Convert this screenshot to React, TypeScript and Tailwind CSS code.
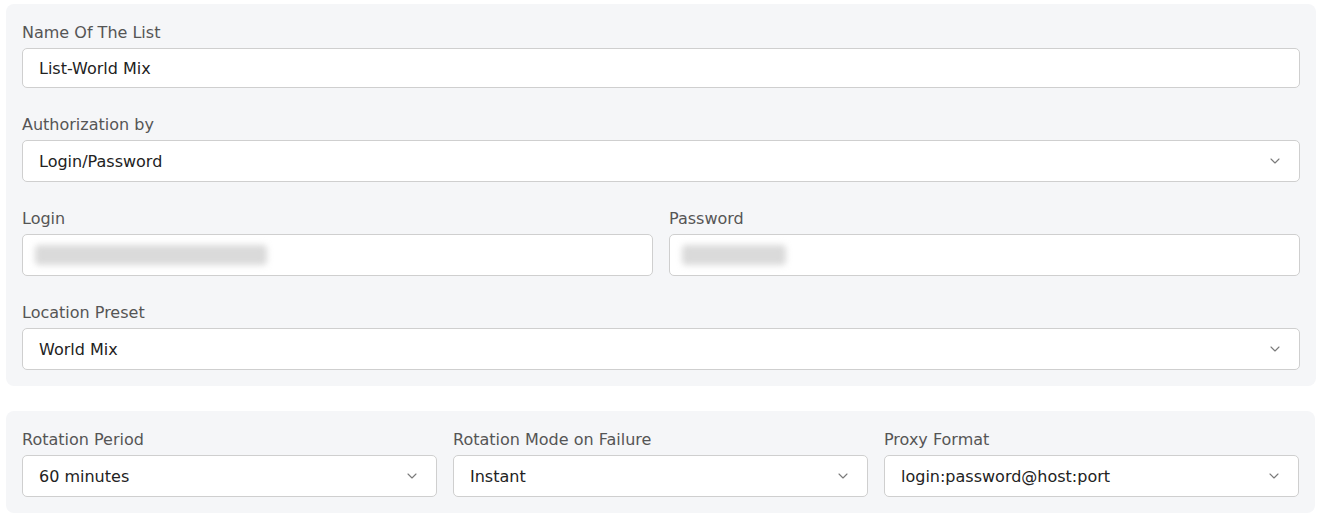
import React from 'react';

const font = { fontFamily: '"DejaVu Sans", Verdana, sans-serif' };

function Chevron() {
  return (
    <svg width="10" height="6" viewBox="0 0 10 6" fill="none" className="shrink-0">
      <path d="M1 1l4 4 4-4" stroke="#7a7a7a" strokeWidth="1.1" strokeLinecap="round" strokeLinejoin="round" />
    </svg>
  );
}

function Label({ children }: { children: React.ReactNode }) {
  return <div className="text-[16px] leading-[22px] pt-[2px] text-[#555] mb-[4px]">{children}</div>;
}

function TextBox({ value, h = 'h-[42px]' }: { value: React.ReactNode; h?: string }) {
  return (
    <div className={`${h} bg-white border border-[#cfcfcf] rounded-[5px] pl-4 pr-5 flex items-center text-[16px] text-[#222] pt-[2px]`}>
      {value}
    </div>
  );
}

function Select({ value }: { value: string }) {
  return (
    <div className="h-[42px] bg-white border border-[#cfcfcf] rounded-[5px] pl-4 pr-[19px] flex items-center justify-between text-[16px] text-[#222]">
      <span className="pt-[2px]">{value}</span>
      <Chevron />
    </div>
  );
}

// masked credential values
function Blurred({ width }: { width: string }) {
  return <div className={`${width} h-[20px] bg-[#dadada] rounded-sm blur-[3px] -ml-[4px] -mt-[2px]`} />;
}

export default function App() {
  return (
    <div className="w-[1325px] h-[523px] bg-white px-[6px] pt-[4px]" style={font}>
      <div className="w-[1310px] bg-[#f5f6f8] rounded-[8px] p-4 flex flex-col gap-6">
        <div>
          <Label>Name Of The List</Label>
          <TextBox value="List-World Mix" h="h-10" />
        </div>
        <div>
          <Label>Authorization by</Label>
          <Select value="Login/Password" />
        </div>
        <div className="grid grid-cols-2 gap-4">
          <div>
            <Label>Login</Label>
            <TextBox value={<Blurred width="w-[232px]" />} />
          </div>
          <div>
            <Label>Password</Label>
            <TextBox value={<Blurred width="w-[104px]" />} />
          </div>
        </div>
        <div>
          <Label>Location Preset</Label>
          <Select value="World Mix" />
        </div>
      </div>

      <div className="w-[1309px] mt-[25px] bg-[#f5f6f8] rounded-[8px] p-4 grid grid-cols-3 gap-4">
        <div>
          <Label>Rotation Period</Label>
          <Select value="60 minutes" />
        </div>
        <div>
          <Label>Rotation Mode on Failure</Label>
          <Select value="Instant" />
        </div>
        <div>
          <Label>Proxy Format</Label>
          <Select value="login:password@host:port" />
        </div>
      </div>
    </div>
  );
}
